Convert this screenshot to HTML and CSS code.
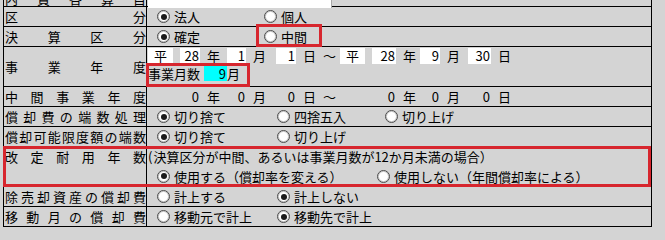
FILE: index.html
```html
<!DOCTYPE html>
<html lang="ja">
<head>
<meta charset="utf-8">
<title>償却設定</title>
<link rel="stylesheet" href="styles.css">
</head>
<body>
<div class="page">
  <div class="sheet">
    <div class="row row-top">
      <div class="label">内資各算目</div>
      <div class="value"><div class="textbox"></div></div>
    </div>
    <div class="row">
      <div class="label">区分</div>
      <div class="value opts">
        <span class="opt w107"><span class="radio on"></span>法人</span>
        <span class="opt"><span class="radio"></span>個人</span>
      </div>
    </div>
    <div class="row">
      <div class="label">決算区分</div>
      <div class="value opts">
        <span class="opt w107"><span class="radio on"></span>確定</span>
        <span class="opt"><span class="radio"></span>中間</span>
      </div>
    </div>
    <div class="row tall">
      <div class="label">事業年度</div>
      <div class="value stack">
        <div class="dates line1">
          <span class="box">平</span>
          <span class="box num">28</span>
          <span class="unit">年</span>
          <span class="box num">1</span>
          <span class="unit">月</span>
          <span class="box num">1</span>
          <span class="unit">日</span>
          <span class="unit">～</span>
          <span class="box">平</span>
          <span class="box num">28</span>
          <span class="unit">年</span>
          <span class="box num">9</span>
          <span class="unit">月</span>
          <span class="box num">30</span>
          <span class="unit">日</span>
        </div>
        <div class="months">
          <span>事業月数</span>
          <span class="box num cyan">9</span>
          <span>月</span>
        </div>
      </div>
    </div>
    <div class="row">
      <div class="label">中間事業年度</div>
      <div class="value">
        <div class="dates plain">
          <span class="box"></span>
          <span class="box num">0</span>
          <span class="unit">年</span>
          <span class="box num">0</span>
          <span class="unit">月</span>
          <span class="box num">0</span>
          <span class="unit">日</span>
          <span class="unit">～</span>
          <span class="box"></span>
          <span class="box num">0</span>
          <span class="unit">年</span>
          <span class="box num">0</span>
          <span class="unit">月</span>
          <span class="box num">0</span>
          <span class="unit">日</span>
        </div>
      </div>
    </div>
    <div class="row">
      <div class="label">償却費の端数処理</div>
      <div class="value opts">
        <span class="opt w120"><span class="radio on"></span>切り捨て</span>
        <span class="opt w108"><span class="radio"></span>四捨五入</span>
        <span class="opt"><span class="radio"></span>切り上げ</span>
      </div>
    </div>
    <div class="row">
      <div class="label">償却可能限度額の端数</div>
      <div class="value opts">
        <span class="opt w120"><span class="radio on"></span>切り捨て</span>
        <span class="opt"><span class="radio"></span>切り上げ</span>
      </div>
    </div>
    <div class="row tall top">
      <div class="label">改定耐用年数</div>
      <div class="value stack">
        <div class="note"><span class="open">(</span>決算区分が中間、あるいは事業月数が12か月未満の場合）</div>
        <div class="opts line2">
          <span class="opt w220"><span class="radio on"></span>使用する（償却率を変える）</span>
          <span class="opt"><span class="radio"></span>使用しない（年間償却率による）</span>
        </div>
      </div>
    </div>
    <div class="row">
      <div class="label">除売却資産の償却費</div>
      <div class="value opts">
        <span class="opt w120"><span class="radio"></span>計上する</span>
        <span class="opt"><span class="radio on"></span>計上しない</span>
      </div>
    </div>
    <div class="row">
      <div class="label">移動月の償却費</div>
      <div class="value opts">
        <span class="opt w120"><span class="radio"></span>移動元で計上</span>
        <span class="opt"><span class="radio on"></span>移動先で計上</span>
      </div>
    </div>
  </div>
  <div class="mark mark-mid"></div>
  <div class="mark mark-months"></div>
  <div class="mark mark-revise"></div>
</div>
</body>
</html>
```

FILE: styles.css
```css
* { box-sizing: border-box; }

body {
  margin: 0;
  background: #d4d4d4;
  font-family: "Noto Sans CJK JP", "Noto Sans", sans-serif;
  font-size: 13px;
  color: #000;
}

.page {
  position: relative;
  height: 227px;
  overflow: hidden;
}

.sheet {
  margin-top: -13px;
  margin-left: 3px;
  width: 649px;
  border-left: 1px solid #000;
  border-right: 1px solid #000;
}

.row {
  display: grid;
  grid-template-columns: 143px 1fr;
  height: 20px;
  border-bottom: 1px solid #000;
}

.row.tall { height: 40px; }

.label {
  display: block;
  border-right: 1px solid #000;
  padding: 0 0 0 1px;
  line-height: 19px;
  white-space: nowrap;
  text-align: justify;
  text-align-last: justify;
}

.row.tall .label { line-height: 39px; }
.row.tall.top .label { line-height: 19px; }
.row-top .label { padding-top: 2px; }

.value {
  line-height: 19px;
  white-space: nowrap;
}

.textbox {
  margin-left: 1px;
  width: 184px;
  height: 100%;
  background: #fff;
  border-right: 1px solid #a8a8a8;
}

.opts {
  display: flex;
  align-items: center;
  padding-left: 10px;
}

.opt {
  display: inline-flex;
  align-items: center;
  gap: 4px;
  height: 19px;
}

.w107 { width: 107px; }
.w108 { width: 108px; }
.w120 { width: 120px; }
.w220 { width: 220px; }

.radio {
  position: relative;
  width: 13px;
  height: 13px;
  border-radius: 50%;
  background: #fff;
  border: 1px solid #4a4a4a;
  box-shadow: inset 0 0 0 1px #c8c8c8;
  flex: none;
}

.radio.on::after {
  content: "";
  position: absolute;
  left: 2.5px;
  top: 2.5px;
  width: 6px;
  height: 6px;
  border-radius: 50%;
  background: #1a1a1a;
}

.stack {
  display: flex;
  flex-direction: column;
}

.dates {
  display: grid;
  grid-template-columns: 25px 20px 13px 19px 16px 20px 13px 10px 25px 24px 10px 20px 14px 23px 13px;
  column-gap: 7px;
  align-items: center;
  padding-left: 1px;
  height: 19px;
}

.dates.line1 { height: 18px; }

.box {
  height: 16px;
  line-height: 16px;
  text-align: center;
  background: #fff;
}

.box.num {
  text-align: right;
  padding-right: 1px;
}

.dates.plain .box { background: transparent; }

.unit { line-height: 16px; }

.months {
  display: flex;
  align-items: center;
  height: 17px;
  padding-left: 1px;
}

.box.cyan {
  width: 23px;
  height: 15px;
  line-height: 15px;
  margin-left: 4px;
  background: #00ffff;
}

.note {
  height: 19px;
  line-height: 19px;
  padding-left: 1px;
}

.note .open { margin-right: 1px; }

.line2 { height: 20px; }

.mark {
  position: absolute;
  border: 3px solid #d7262e;
}

.mark-mid { left: 256px; top: 24px; width: 66px; height: 23px; }
.mark-months { left: 146px; top: 63px; width: 104px; height: 24px; }
.mark-revise { left: 3px; top: 146px; width: 648px; height: 41px; }
```
